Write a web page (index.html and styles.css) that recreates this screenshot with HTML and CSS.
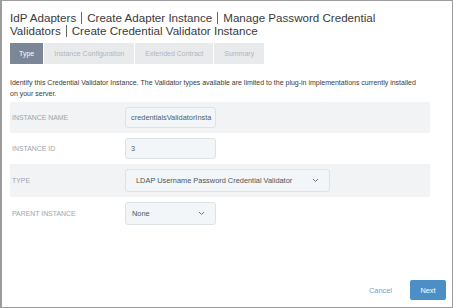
FILE: index.html
```html
<!DOCTYPE html>
<html lang="en">
<head>
    <meta charset="UTF-8">
    <title>Create Credential Validator Instance</title>
    <link rel="stylesheet" href="styles.css">
</head>
<body>
    <div class="modal">
        <h1 class="title"><span class="crumb">IdP Adapters</span><span class="crumb">Create Adapter Instance</span><span class="crumb">Manage Password Credential</span> <span>Validators</span><span class="crumb">Create Credential Validator Instance</span></h1>

        <div class="tabs">
            <div class="tab tab-active">Type</div>
            <div class="tab">Instance Configuration</div>
            <div class="tab">Extended Contract</div>
            <div class="tab">Summary</div>
        </div>

        <p class="intro">Identify this Credential Validator Instance. The Validator types available are limited to the plug-in implementations currently installed on your server.</p>

        <div class="form">
            <div class="form-row shaded">
                <label class="form-label">Instance Name</label>
                <div class="field">credentialsValidatorInsta</div>
            </div>
            <div class="form-row">
                <label class="form-label">Instance ID</label>
                <div class="field">3</div>
            </div>
            <div class="form-row shaded">
                <label class="form-label">Type</label>
                <div class="field field-select field-wide">
                    <span>LDAP Username Password Credential Validator</span>
                    <svg class="caret" width="7" height="5" viewBox="0 0 7 5"><path d="M1 1 L3.5 3.5 L6 1" fill="none" stroke="#6b7785" stroke-width="1"/></svg>
                </div>
            </div>
            <div class="form-row">
                <label class="form-label">Parent Instance</label>
                <div class="field field-select">
                    <span>None</span>
                    <svg class="caret" width="7" height="5" viewBox="0 0 7 5"><path d="M1 1 L3.5 3.5 L6 1" fill="none" stroke="#6b7785" stroke-width="1"/></svg>
                </div>
            </div>
        </div>

        <div class="footer">
            <button class="btn-link">Cancel</button>
            <button class="btn-primary">Next</button>
        </div>
    </div>
</body>
</html>
```

FILE: styles.css
```css
* {
    margin: 0;
    padding: 0;
    box-sizing: border-box;
}

body {
    font-family: "Liberation Sans", Arial, sans-serif;
    background: #ffffff;
    color: #333333;
}

.modal {
    width: 453px;
    height: 308px;
    border: 1px solid #9c9c9c;
    border-left-width: 2px;
    display: flex;
    flex-direction: column;
    padding: 10px 6px 7px 8px;
}

.title {
    font-size: 11.6px;
    font-weight: 400;
    line-height: 13px;
    color: #3a3a3a;
    padding-right: 60px;
}

/* thin vertical divider between breadcrumb parts */
.crumb:not(:first-child)::before {
    content: "";
    display: inline-block;
    width: 1px;
    height: 12px;
    margin: 0 5px;
    background: #666666;
    vertical-align: -2px;
}

.tabs {
    display: flex;
    gap: 1px;
    margin-top: 6px;
}

.tab {
    height: 21px;
    line-height: 21px;
    padding: 0 10px;
    font-size: 7px;
    background: #e9eaec;
    color: #b2b5ba;
}

.tab-active {
    background: #7b8696;
    color: #ffffff;
    padding: 0 9px;
}

.intro {
    font-size: 7px;
    line-height: 10.5px;
    margin-top: 14px;
    max-width: 411px;
    color: #3a3a3a;
}

.form {
    margin-top: 3px;
    width: 420px;
}

.form-row {
    display: flex;
    align-items: center;
    padding: 5px 0;
}

.shaded {
    background: #f2f3f4;
}

.form-label {
    width: 115px;
    padding-left: 2px;
    font-size: 6.9px;
    text-transform: uppercase;
    color: #a0a4a9;
}

.field {
    width: 91px;
    height: 21px;
    line-height: 19px;
    padding: 0 5px;
    font-size: 7.4px;
    color: #555b61;
    background: #f3f6f8;
    border: 1px solid #dde2e6;
    border-radius: 3px;
    white-space: nowrap;
    overflow: hidden;
}

.field-select {
    height: 23px;
    line-height: 21px;
    display: flex;
    justify-content: space-between;
    align-items: center;
    padding: 0 10px 0 6px;
    color: #4e545a;
}

.field-wide {
    width: 205px;
    padding-left: 10px;
}

.caret {
    flex: none;
}

.footer {
    margin-top: auto;
    display: flex;
    justify-content: flex-end;
    align-items: center;
    gap: 18px;
}

.btn-link {
    border: none;
    background: none;
    font-family: inherit;
    font-size: 7.4px;
    color: #6aa3d3;
}

.btn-primary {
    width: 36px;
    height: 20px;
    border: none;
    border-radius: 2px;
    background: #4c8fc6;
    color: #ffffff;
    font-family: inherit;
    font-size: 7.4px;
}
```
